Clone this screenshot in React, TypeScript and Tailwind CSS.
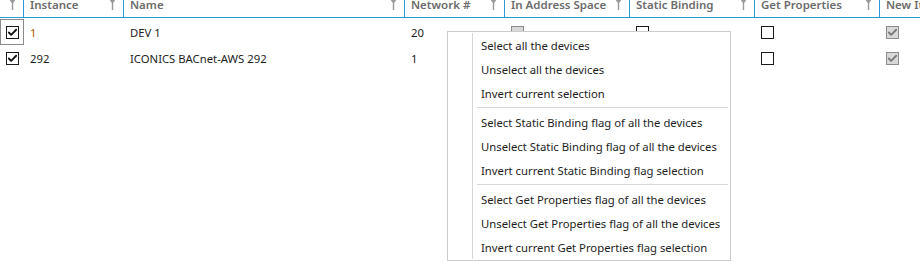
import { Check } from "lucide-react";

const font = { fontFamily: '"Noto Sans", "Open Sans", sans-serif' };

type Col = { title: string; width: string };

const COLS: Col[] = [
  { title: "", width: "w-[24px]" },
  { title: "Instance", width: "w-[100px]" },
  { title: "Name", width: "w-[281px]" },
  { title: "Network #", width: "w-[100px]" },
  { title: "In Address Space", width: "w-[125px]" },
  { title: "Static Binding", width: "w-[125px]" },
  { title: "Get Properties", width: "w-[125px]" },
  { title: "New Items", width: "w-[125px]" },
];

function FilterIcon() {
  return (
    <svg width="7" height="12" viewBox="0 0 7 12" className="shrink-0 text-[#9a9a9a]">
      <path d="M0 0 H7 L4.2 4 V11 H2.8 V4 Z" fill="currentColor" />
    </svg>
  );
}

function Box({ variant, checked }: { variant: "plain" | "grey"; checked?: boolean }) {
  const cls =
    variant === "grey"
      ? "bg-[#d8d8d8] border-[#8c8c8c] text-[#7a7a7a]"
      : "bg-white border-[#1a1a1a] text-[#111]";
  return (
    <div className={`w-[13px] h-[13px] border flex items-center justify-center ${cls}`}>
      {checked && <Check className="w-[11px] h-[11px]" strokeWidth={4} />}
    </div>
  );
}

const MENU = [
  ["Select all the devices", "Unselect all the devices", "Invert current selection"],
  [
    "Select Static Binding flag of all the devices",
    "Unselect Static Binding flag of all the devices",
    "Invert current Static Binding flag selection",
  ],
  [
    "Select Get Properties flag of all the devices",
    "Unselect Get Properties flag of all the devices",
    "Invert current Get Properties flag selection",
  ],
];

const ROWS = [
  { instance: "1", name: "DEV 1", network: "20", focused: true },
  { instance: "292", name: "ICONICS BACnet-AWS 292", network: "1", focused: false },
];

export default function App() {
  return (
    <div className="relative w-[920px] h-[272px] bg-white overflow-hidden text-[11.3px] text-[#1e1e1e]" style={font}>
      {/* header, scrolled up */}
      <div className="flex h-[26px] -mt-[8px] border-b border-[#2b9ad6]">
        {COLS.map((c, i) => (
          <div
            key={i}
            className={`${c.width} shrink-0 flex items-center justify-between pl-[6px] pr-[7px] border-r border-[#2b9ad6] font-semibold text-[12px] text-[#6b6b6b] whitespace-nowrap overflow-hidden`}
          >
            <span className="text-[11.5px]">{c.title}</span>
            {i < COLS.length - 1 && <FilterIcon />}
          </div>
        ))}
      </div>

      {/* rows */}
      <div className="mt-[1px]">
        {ROWS.map((r, i) => (
          <div key={i} className="flex h-[26px] items-center">
            <div
              className={`w-[24px] h-[26px] shrink-0 flex items-center pl-[5px] border ${
                r.focused ? "border-[#8a8a8a]" : "border-transparent"
              }`}
            >
              <Box variant="plain" checked />
            </div>
            <div className={`w-[100px] shrink-0 pl-[6px] pt-[2px] ${r.focused ? "text-[#b85a00]" : ""}`}>{r.instance}</div>
            <div className="w-[281px] shrink-0 pl-[6px] pt-[2px]">{r.name}</div>
            <div className="w-[100px] shrink-0 pl-[6px] pt-[2px]">{r.network}</div>
            <div className="w-[125px] shrink-0 pl-[6px]">
              <Box variant="grey" />
            </div>
            <div className="w-[125px] shrink-0 pl-[6px]">
              <Box variant="plain" />
            </div>
            <div className="w-[125px] shrink-0 pl-[6px]">
              <Box variant="plain" />
            </div>
            <div className="w-[125px] shrink-0 pl-[6px]">
              <Box variant="grey" checked />
            </div>
          </div>
        ))}
      </div>

      {/* context menu */}
      <div className="absolute left-[447px] top-[31px] w-[284px] bg-white border border-[#cccccc] py-[1px] flex">
        <div className="w-[25px] shrink-0 border-r border-[#d5d5d5]" />
        <div className="flex-1 flex flex-col">
          {MENU.map((group, gi) => (
            <div key={gi} className="flex flex-col">
              {gi > 0 && (
                <div className="h-[5px] flex items-center pl-[4px] pr-[2px]">
                  <div className="h-px w-full bg-[#d7d7d7]" />
                </div>
              )}
              {group.map((item) => (
                <div key={item} className="h-[24px] flex items-center pl-[8px] pt-[2px] whitespace-nowrap">
                  {item}
                </div>
              ))}
            </div>
          ))}
        </div>
      </div>
    </div>
  );
}
